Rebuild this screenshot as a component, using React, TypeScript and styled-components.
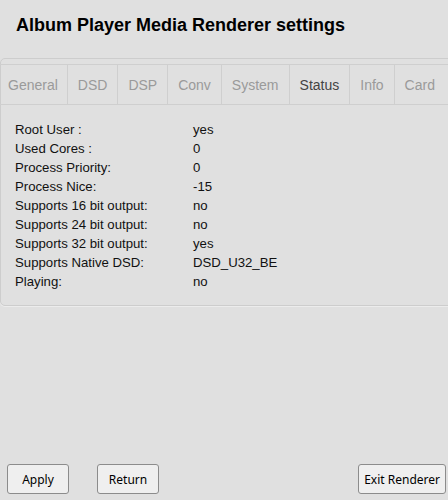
import React from "react";
import styled, { createGlobalStyle } from "styled-components";

const Global = createGlobalStyle`
  html, body { margin: 0; padding: 0; background: #e0e0e0; }
  body { font-family: "Liberation Sans", Arial, sans-serif; overflow: hidden; }
`;

const Page = styled.div`
  height: 500px;
  display: flex;
  flex-direction: column;
  box-sizing: border-box;
`;

const Title = styled.h1`
  margin: 0;
  padding: 15px 0 0 16px;
  font-size: 18px;
  font-weight: bold;
  color: #000;
  line-height: normal;
`;

const Panel = styled.div`
  margin-top: 22px;
  margin-right: -6px;
  border: 1px solid #cdcdcd;
  border-radius: 5px;
  padding-top: 5px;
  padding-bottom: 14px;
  box-shadow: 0 1px 0 #ececec;
`;

const TabBar = styled.div`
  display: flex;
  border-top: 1px solid #cfcfcf;
  border-bottom: 1px solid #cfcfcf;
  margin-left: -4px;
`;

const Tab = styled.div<{ $active?: boolean }>`
  height: 39px;
  display: flex;
  align-items: center;
  padding: 0 10px;
  border-left: 1px solid #cfcfcf;
  font-size: 14px;
  color: ${(p) => (p.$active ? "#444" : "#9a9a9a")};
  &:first-child { border-left-color: transparent; padding-right: 9px; }
`;

const Table = styled.div`
  display: grid;
  grid-template-columns: 178px 1fr;
  padding: 15px 0 0 14px;
  font-size: 13.2px;
  line-height: 19px;
  color: #111;
`;

const Cell = styled.div``;

const Footer = styled.div`
  margin-top: auto;
  display: flex;
  align-items: center;
  padding: 0 2px 6px 7px;
  gap: 28px;
`;

const Button = styled.button<{ $push?: boolean }>`
  min-width: 62px;
  height: 30px;
  padding: 0 5px;
  border: 1px solid #8c8c8c;
  border-radius: 3px;
  background: #efefef;
  font-family: "Noto Sans", "Open Sans", sans-serif;
  font-size: 12px;
  color: #000;
  margin-left: ${(p) => (p.$push ? "auto" : "0")};
`;

const tabs = ["General", "DSD", "DSP", "Conv", "System", "Status", "Info", "Card"];

const rows: [string, string][] = [
  ["Root User :", "yes"],
  ["Used Cores :", "0"],
  ["Process Priority:", "0"],
  ["Process Nice:", "-15"],
  ["Supports 16 bit output:", "no"],
  ["Supports 24 bit output:", "no"],
  ["Supports 32 bit output:", "yes"],
  ["Supports Native DSD:", "DSD_U32_BE"],
  ["Playing:", "no"],
];

export default function App() {
  return (
    <Page>
      <Global />
      <Title>Album Player Media Renderer settings</Title>
      <Panel>
        <TabBar>
          {tabs.map((t) => (
            <Tab key={t} $active={t === "Status"}>
              {t}
            </Tab>
          ))}
        </TabBar>
        <Table>
          {rows.map(([k, v]) => (
            <React.Fragment key={k}>
              <Cell>{k}</Cell>
              <Cell>{v}</Cell>
            </React.Fragment>
          ))}
        </Table>
      </Panel>
      <Footer>
        <Button>Apply</Button>
        <Button>Return</Button>
        <Button $push>Exit Renderer</Button>
      </Footer>
    </Page>
  );
}
